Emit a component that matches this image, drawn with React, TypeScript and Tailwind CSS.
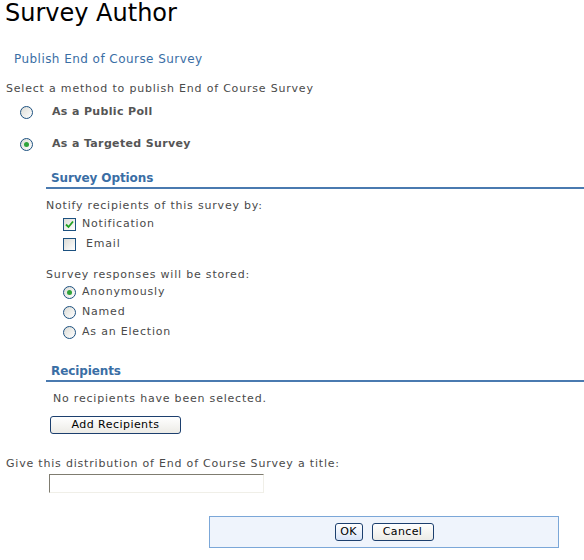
import React from "react";

function Radio({ checked = false }: { checked?: boolean }) {
  return (
    <span className="inline-flex h-[13px] w-[13px] shrink-0 items-center justify-center rounded-full border border-[#1c5180] bg-gradient-to-br from-[#dcdcd6] to-white">
      {checked && <span className="h-[5px] w-[5px] rounded-full bg-[#2fa33a]" />}
    </span>
  );
}

function Checkbox({ checked = false }: { checked?: boolean }) {
  return (
    <span className="inline-flex h-[13px] w-[13px] shrink-0 items-center justify-center border border-[#1c5180] bg-gradient-to-br from-[#dcdcd6] to-white">
      {checked && (
        <svg width="9" height="9" viewBox="0 0 9 9">
          <path d="M1 4.5 L3.5 7 L8 1.5" fill="none" stroke="#21a121" strokeWidth="1.8" />
        </svg>
      )}
    </span>
  );
}

function SectionHeader({ title }: { title: string }) {
  return (
    <div className="ml-[46px] border-b-2 border-[#4a7ab0] pl-[5px] pb-[1px] text-[12px] font-bold leading-[16px] tracking-[-0.1px] text-[#3a6ea5]">
      {title}
    </div>
  );
}

export default function App() {
  return (
    <div
      className="h-[560px] w-[584px] overflow-hidden bg-white text-[11px] tracking-[0.8px] text-[#4a4a4a]"
      style={{ fontFamily: "'DejaVu Sans', Verdana, sans-serif" }}
    >
      <h1 className="pl-[5px] text-[24px] font-normal leading-[26px] tracking-normal text-black">Survey Author</h1>

      <div className="mt-[25px] pl-[14px] text-[12px] leading-[16px] tracking-[0.45px] text-[#3a6ea5]">
        Publish End of Course Survey
      </div>

      <div className="mt-[15px] pl-[6px] leading-[14px]">Select a method to publish End of Course Survey</div>

      <div className="mt-[9px] flex items-center pl-[20px]">
        <Radio />
        <span className="ml-[19px] font-bold leading-[14px] tracking-[0.35px] text-[#555]">As a Public Poll</span>
      </div>
      <div className="mt-[18px] flex items-center pl-[20px]">
        <Radio checked />
        <span className="ml-[19px] font-bold leading-[14px] tracking-[0.35px] text-[#555]">As a Targeted Survey</span>
      </div>

      <div className="mt-[19px]">
        <SectionHeader title="Survey Options" />
      </div>

      <div className="ml-[46px] mt-[10px] leading-[14px]">Notify recipients of this survey by:</div>
      <div className="ml-[63px] mt-[4px] flex items-center gap-[6px] leading-[14px]">
        <Checkbox checked />
        <span>Notification</span>
      </div>
      <div className="ml-[63px] mt-[6px] flex items-center gap-[10px] leading-[14px]">
        <Checkbox />
        <span>Email</span>
      </div>

      <div className="ml-[46px] mt-[17px] leading-[14px]">Survey responses will be stored:</div>
      <div className="ml-[63px] mt-[3px] flex flex-col gap-[6px] leading-[14px]">
        <div className="flex items-center gap-[6px]">
          <Radio checked />
          <span>Anonymously</span>
        </div>
        <div className="flex items-center gap-[6px]">
          <Radio />
          <span>Named</span>
        </div>
        <div className="flex items-center gap-[6px]">
          <Radio />
          <span>As an Election</span>
        </div>
      </div>

      <div className="mt-[24px]">
        <SectionHeader title="Recipients" />
      </div>

      <div className="ml-[53px] mt-[10px] leading-[14px]">No recipients have been selected.</div>
      <button className="ml-[50px] mt-[10px] h-[18px] w-[131px] rounded-[3px] border border-[#1c3f6e] bg-gradient-to-b from-white to-[#ecebe6] text-[11px] leading-[14px] tracking-[0.45px] text-black">
        Add Recipients
      </button>

      <div className="mt-[23px] pl-[6px] leading-[14px]">Give this distribution of End of Course Survey a title:</div>
      <input
        type="text"
        className="ml-[49px] mt-[3px] block h-[19px] w-[215px] border border-t-[#7f7c70] border-l-[#7f7c70] border-r-[#f0efe8] border-b-[#f0efe8] bg-white outline-none"
      />

      <div className="ml-[209px] mt-[23px] flex h-[32px] w-[350px] items-center justify-center gap-[9px] border border-[#7ba7d8] bg-[#eff4fc]">
        <button className="h-[18px] w-[28px] rounded-[3px] border border-[#1c3f6e] bg-gradient-to-b from-white to-[#d8e4f8] text-[11px] leading-[14px] tracking-[0.4px] text-black">
          OK
        </button>
        <button className="h-[18px] w-[62px] rounded-[3px] border border-[#1c3f6e] bg-gradient-to-b from-white to-[#ecebe6] text-[11px] leading-[14px] tracking-[0.4px] text-black">
          Cancel
        </button>
      </div>
    </div>
  );
}
